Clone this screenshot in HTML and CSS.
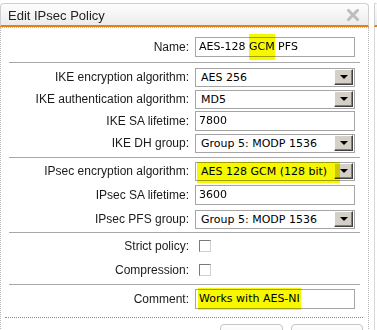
FILE: index.html
```html
<!DOCTYPE html>
<html lang="en">
<head>
    <meta charset="UTF-8">
    <title>Edit IPsec Policy</title>
    <link rel="stylesheet" href="styles.css">
</head>
<body>

<div class="page">
    <div class="dialog">
        <div class="titlebar">
            <span class="title">Edit IPsec Policy</span>
            <svg class="close" width="12" height="12" viewBox="0 0 12 12">
                <path d="M1.5 1.5 L10.5 10.5 M10.5 1.5 L1.5 10.5" stroke="#bdbdbd" stroke-width="3" stroke-linecap="square"/>
            </svg>
        </div>

        <div class="dialog-body">
            <div class="group group-name">
                <div class="row">
                    <label>Name:</label>
                    <div class="field text">AES-128 <mark class="hl hl-name">GCM</mark> PFS</div>
                </div>
            </div>

            <div class="group group-ike">
                <div class="row">
                    <label>IKE encryption algorithm:</label>
                    <div class="field select"><span>AES 256</span><span class="arrow"></span></div>
                </div>
                <div class="row">
                    <label>IKE authentication algorithm:</label>
                    <div class="field select"><span>MD5</span><span class="arrow"></span></div>
                </div>
                <div class="row">
                    <label>IKE SA lifetime:</label>
                    <div class="field text">7800</div>
                </div>
                <div class="row">
                    <label>IKE DH group:</label>
                    <div class="field select"><span>Group 5: MODP 1536</span><span class="arrow"></span></div>
                </div>
            </div>

            <div class="group group-ipsec">
                <div class="row">
                    <label>IPsec encryption algorithm:</label>
                    <div class="field select marked"><span>AES 128 GCM (128 bit)</span><span class="arrow"></span></div>
                </div>
                <div class="row">
                    <label>IPsec SA lifetime:</label>
                    <div class="field text">3600</div>
                </div>
                <div class="row">
                    <label>IPsec PFS group:</label>
                    <div class="field select"><span>Group 5: MODP 1536</span><span class="arrow"></span></div>
                </div>
            </div>

            <div class="group group-flags">
                <div class="row">
                    <label>Strict policy:</label>
                    <div><span class="check"></span></div>
                </div>
                <div class="row">
                    <label>Compression:</label>
                    <div><span class="check"></span></div>
                </div>
            </div>

            <div class="group group-comment">
                <div class="row">
                    <label>Comment:</label>
                    <div class="field text"><mark class="hl hl-comment">Works with AES-NI</mark></div>
                </div>
            </div>

            <div class="footer">
                <button class="btn btn-save"></button>
                <button class="btn btn-cancel"></button>
            </div>
        </div>
    </div>

    <div class="side-panel">
        <div class="titlebar"></div>
        <div class="side-body"></div>
    </div>
</div>

</body>
</html>
```

FILE: styles.css
```css
body {
    margin: 0;
    padding: 3px 0 0 0;
    background: #fff;
    font-family: "Liberation Sans", Arial, sans-serif;
    font-size: 12px;
    color: #1a1a1a;
    overflow: hidden;
}
.page {
    display: flex;
    gap: 5px;
}
.dialog {
    width: 369px;
    flex: none;
}
.titlebar {
    height: 21px;
    border: 1px solid #cfcfcf;
    border-bottom: 2px solid #e8800c;
    border-radius: 4px 4px 0 0;
    background: linear-gradient(#fdfdfd, #ececec);
    display: flex;
    align-items: center;
    justify-content: space-between;
    padding: 0 9px 0 7px;
}
.title {
    font-size: 13px;
    color: #222;
    padding-top: 1px;
}
.close {
    display: block;
    margin-top: 1px;
}
.dialog-body {
    border: 1px dotted #b5b5b5;
    min-height: 320px;
}
.group {
    margin: 0 8px;
}
.group + .group {
    border-top: 1px solid #a8a8a8;
}
.group-name {
    padding: 8px 0 4px;
}
.group-ike {
    padding: 3px 0 3px;
}
.group-ipsec {
    padding: 1px 0 1px;
}
.group-ipsec .row,
.group-flags .row {
    height: 24px;
}
.group-flags {
    padding: 1px 0 2px;
}
.group-comment {
    padding: 3px 0 7px;
}
.row {
    display: grid;
    grid-template-columns: 180px 160px;
    column-gap: 6px;
    align-items: center;
    height: 22px;
}
.row label {
    text-align: right;
}
.field {
    box-sizing: border-box;
    border: 1px solid #a5a5a5;
    background: #fff;
    color: #000;
    white-space: nowrap;
    font-family: "DejaVu Sans", Verdana, sans-serif;
    font-size: 11px;
}
.text {
    height: 20px;
    line-height: 18px;
    padding-left: 3px;
}
.select {
    height: 19px;
    display: flex;
    align-items: center;
    justify-content: space-between;
    padding-left: 5px;
    position: relative;
}
.arrow {
    box-sizing: border-box;
    width: 19px;
    height: 16px;
    margin-right: 1px;
    background: #d4d0c8;
    border-top: 1px solid #fff;
    border-left: 1px solid #fff;
    border-right: 1px solid #404040;
    border-bottom: 1px solid #404040;
    box-shadow: inset -1px -1px 0 #808080;
    position: relative;
}
.arrow::after {
    content: "";
    position: absolute;
    left: 5px;
    top: 5px;
    border-left: 4px solid transparent;
    border-right: 4px solid transparent;
    border-top: 4px solid #000;
}
.check {
    display: block;
    box-sizing: border-box;
    width: 12px;
    height: 12px;
    margin-left: 4px;
    background: #fff;
    border-top: 1px solid #7a7a7a;
    border-left: 1px solid #7a7a7a;
    border-right: 1px solid #d0d0d0;
    border-bottom: 1px solid #d0d0d0;
}
.hl {
    background: #f7f700;
    color: inherit;
    mix-blend-mode: multiply;
}
.hl-name {
    padding: 6px 0 7px;
}
.hl-comment {
    padding: 4px 1px 5px;
    margin-left: -1px;
}
.marked::after {
    content: "";
    position: absolute;
    left: 1px;
    top: -1px;
    width: 143px;
    height: 21px;
    background: #f7f700;
    mix-blend-mode: multiply;
}
.footer {
    margin: 0 5px 0 4px;
    border-top: 1px dotted #8a8a8a;
    padding-top: 6px;
    display: flex;
    justify-content: flex-end;
    gap: 8px;
}
.btn {
    height: 26px;
    border: 1px solid #c6c6c6;
    border-radius: 4px;
    background: linear-gradient(#fefefe, #ececec);
    padding: 0;
}
.btn-save {
    width: 63px;
}
.btn-cancel {
    width: 72px;
}
.side-panel {
    flex: 1;
}
.side-panel .titlebar {
    border-right: none;
    padding: 0;
}
.side-body {
    border-left: 1px solid #d8d8d8;
    height: 320px;
}
```
